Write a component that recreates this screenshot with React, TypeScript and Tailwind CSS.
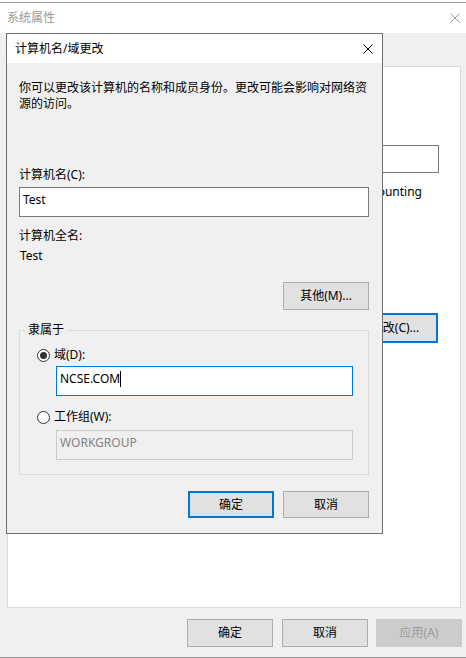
import React from "react";

function XIcon({ color }: { color: string }) {
  return (
    <svg width="10" height="10" viewBox="0 0 10 10" className="block">
      <path d="M0.5 0.5 L9.5 9.5 M9.5 0.5 L0.5 9.5" stroke={color} strokeWidth="1" fill="none" />
    </svg>
  );
}

function Radio({ checked }: { checked: boolean }) {
  return (
    <div className="w-[13px] h-[13px] rounded-full border border-[#333333] bg-white flex items-center justify-center shrink-0">
      {checked && <div className="w-[7px] h-[7px] rounded-full bg-[#333333]" />}
    </div>
  );
}

export default function App() {
  return (
    <div className="relative w-[466px] h-[658px] overflow-hidden bg-[#f0f0f0] text-[12px] leading-[16px] text-black font-['Noto_Sans','Noto_Sans_CJK_SC',sans-serif]">
      {/* Outer window: 系统属性 */}
      <div className="h-[3px] bg-white border-b border-[#a0a0a0]" />
      <div className="h-[30px] bg-white flex items-center justify-between pl-[7px] pr-[6px] text-[#999999]">
        <span>系统属性</span>
        <XIcon color="#999999" />
      </div>
      <div className="pt-[33px] flex flex-col">
        <div className="ml-[7px] w-[454px] h-[542px] bg-white border border-[#d9d9d9] flex flex-col pt-[78px]">
          <div className="flex items-center justify-end pr-[21px]">
            <div className="w-[250px] h-[28px] border border-[#7a7a7a] bg-white" />
          </div>
          <div className="mt-[11px] pr-[38px] text-right">Accounting</div>
          <div className="mt-[113px] flex items-center justify-end pr-[22px]">
            <div className="w-[86px] h-[30px] border-2 border-[#0078d7] bg-[#e1e1e1] flex items-center justify-center">
              更改(C)...
            </div>
          </div>
        </div>
        <div className="flex justify-end pt-[11px] pb-[10px] pr-[4px]">
          <div className="w-[86px] h-[28px] border border-[#adadad] bg-[#e1e1e1] flex items-center justify-center">确定</div>
          <div className="ml-[9px] w-[86px] h-[28px] border border-[#adadad] bg-[#e1e1e1] flex items-center justify-center">取消</div>
          <div className="ml-[8px] w-[86px] h-[28px] border border-[#cccccc] bg-[#cccccc] text-[#9d9d9d] flex items-center justify-center">应用(A)</div>
        </div>
      </div>
      <div className="h-px bg-[#999999]" />

      {/* Dialog: 计算机名/域更改 */}
      <div className="absolute left-[6px] top-[33px] w-[377px] h-[501px] border border-[#707070] bg-[#f0f0f0] flex flex-col">
        <div className="h-[29px] bg-white flex items-center justify-between pl-[8px] pr-[9px]">
          <span>计算机名/域更改</span>
          <XIcon color="#000000" />
        </div>
        <div className="flex flex-col pl-[12px] pr-[13px] pt-[17px]">
          <p>
            你可以更改该计算机的名称和成员身份。更改可能会影响对网络资
            <br />
            源的访问。
          </p>
          <div className="mt-[55px]">计算机名(C):</div>
          <div className="mt-[4px] h-[30px] border border-[#7a7a7a] bg-white flex items-center pl-[3px] pb-[5px]">Test</div>
          <div className="mt-[11px]">计算机全名:</div>
          <div className="mt-[4px] pl-[1px]">Test</div>
          <div className="mt-[18px] self-end w-[86px] h-[28px] border border-[#adadad] bg-[#e1e1e1] flex items-center justify-center">
            其他(M)...
          </div>
          <fieldset className="mt-[12px] border border-[#dcdcdc]">
            <legend className="ml-[5px] px-[3px]">隶属于</legend>
            <div className="flex flex-col pl-[17px] pr-[15px] pt-[9px] pb-[14px]">
              <div className="flex items-center gap-[4px] h-[16px]">
                <Radio checked={true} />
                <span>域(D):</span>
              </div>
              <div className="mt-[3px] ml-[19px] h-[30px] border border-[#0078d7] bg-white flex items-center pl-[3px] pb-[5px]">
                <span>NCSE.COM</span>
                <span className="inline-block w-px h-[16px] bg-black" />
              </div>
              <div className="mt-[13px] flex items-center gap-[4px] h-[16px]">
                <Radio checked={false} />
                <span>工作组(W):</span>
              </div>
              <div className="mt-[5px] ml-[19px] h-[30px] border border-[#cccccc] bg-[#f0f0f0] text-[#838383] flex items-center pl-[3px] pb-[5px]">
                WORKGROUP
              </div>
            </div>
          </fieldset>
          <div className="mt-[16px] flex justify-end">
            <div className="w-[86px] h-[27px] border-2 border-[#0078d7] bg-[#e1e1e1] flex items-center justify-center">确定</div>
            <div className="ml-[9px] w-[86px] h-[27px] border border-[#adadad] bg-[#e1e1e1] flex items-center justify-center">取消</div>
          </div>
        </div>
      </div>
    </div>
  );
}
